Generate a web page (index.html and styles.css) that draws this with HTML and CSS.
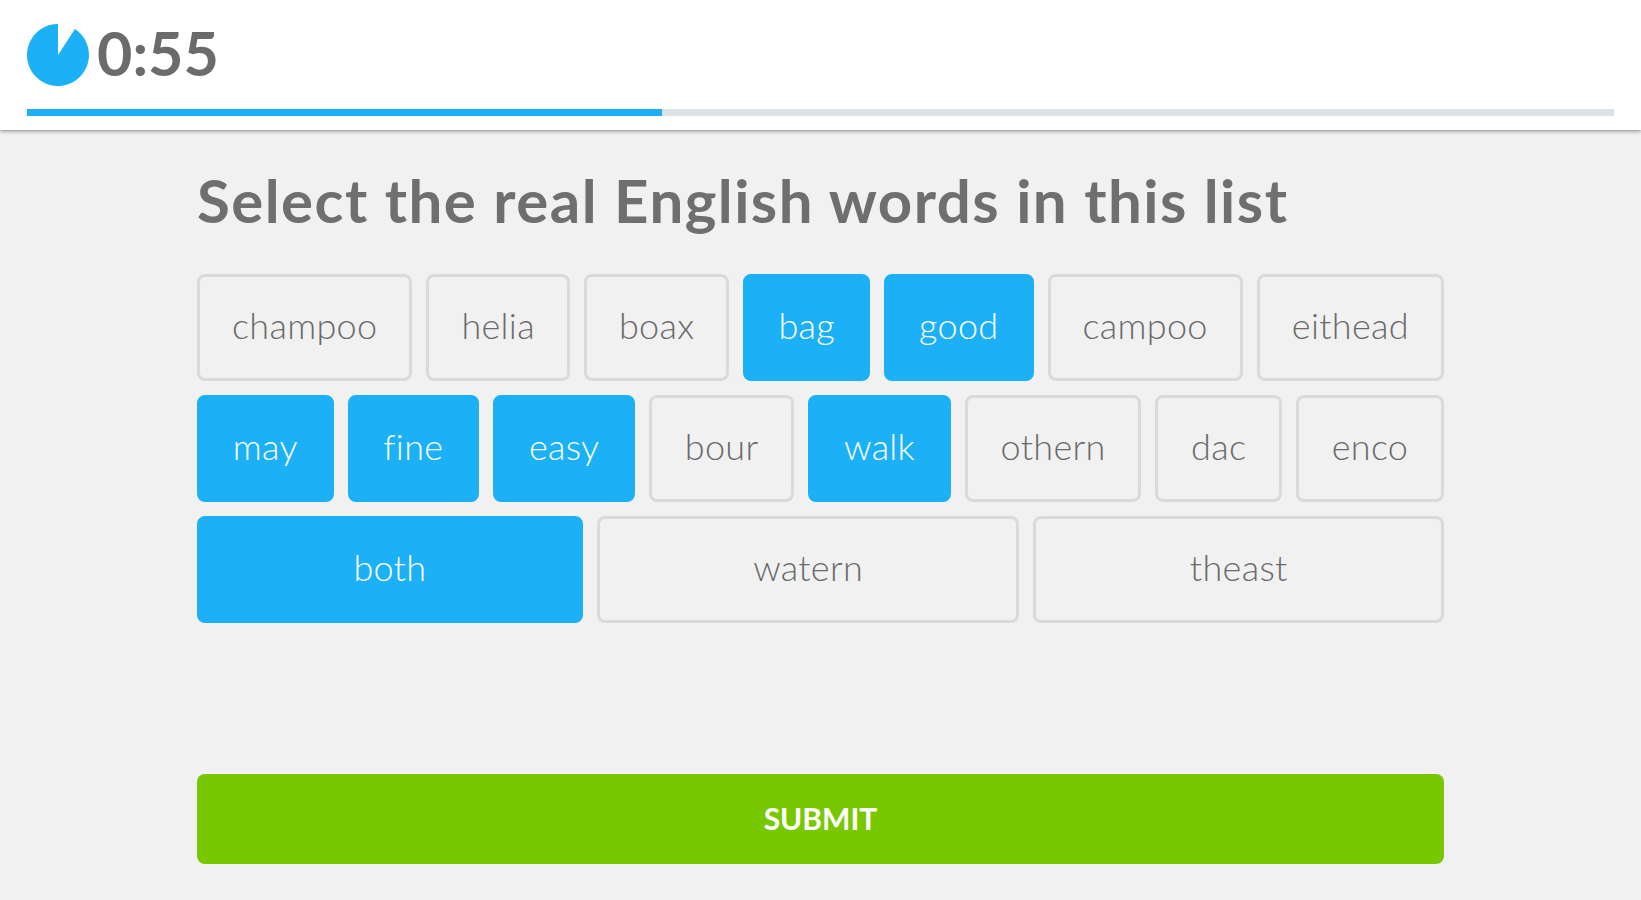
FILE: index.html
```html
<!DOCTYPE html>
<html lang="en">
<head>
    <meta charset="UTF-8">
    <meta name="viewport" content="width=device-width, initial-scale=1.0">
    <title>Select the real English words</title>
    <link rel="stylesheet" href="styles.css">
</head>
<body>
    <header class="top-bar">
        <div class="timer">
            <svg class="timer-icon" viewBox="0 0 62 62" width="62" height="62" aria-hidden="true">
                <path d="M31 31 L31 0 A31 31 0 1 0 48 5.1 Z" fill="#1cb0f6"/>
            </svg>
            <span class="timer-text">0:55</span>
        </div>
        <div class="progress">
            <div class="progress-fill"></div>
        </div>
    </header>

    <main class="container">
        <h1 class="title">Select the real English words in this list</h1>
        <div class="words">
            <div class="word-row">
                <button class="word">champoo</button>
                <button class="word">helia</button>
                <button class="word">boax</button>
                <button class="word selected">bag</button>
                <button class="word selected">good</button>
                <button class="word">campoo</button>
                <button class="word">eithead</button>
            </div>
            <div class="word-row">
                <button class="word selected">may</button>
                <button class="word selected">fine</button>
                <button class="word selected">easy</button>
                <button class="word">bour</button>
                <button class="word selected">walk</button>
                <button class="word">othern</button>
                <button class="word">dac</button>
                <button class="word">enco</button>
            </div>
            <div class="word-row">
                <button class="word selected">both</button>
                <button class="word">watern</button>
                <button class="word">theast</button>
            </div>
        </div>
        <button class="submit">SUBMIT</button>
    </main>
</body>
</html>
```

FILE: styles.css
```css
* {
    box-sizing: border-box;
}
body {
    font-family: Lato, "Open Sans", sans-serif;
    background-color: #f1f1f1;
    color: #6f6f6f;
    margin: 0;
}
.top-bar {
    height: 130px;
    padding: 24px 27px 0;
    background: #fff;
    box-shadow: 0 1px 4px rgba(0, 0, 0, 0.45);
}
.timer {
    display: flex;
    align-items: center;
    gap: 8px;
    height: 62px;
}
.timer-icon {
    flex: none;
}
.timer-text {
    padding-bottom: 4px;
    font-size: 61px;
    font-weight: 700;
    line-height: 62px;
    color: #6b6b6b;
}
.progress {
    height: 7px;
    margin-top: 23px;
    background: #d9e3e6;
}
.progress-fill {
    width: 635px;
    height: 100%;
    background: #1cb0f6;
}
.container {
    width: 1247px;
    margin-left: 197px;
}
.title {
    margin: 34px 0 38px;
    font-size: 60px;
    font-weight: 700;
    letter-spacing: 1.45px;
    line-height: 72px;
    color: #6f6f6f;
}
.words {
    display: flex;
    flex-direction: column;
    gap: 14px;
}
.word-row {
    display: flex;
    gap: 14px;
}
.word {
    flex: 1 1 auto;
    height: 107px;
    padding: 0 32px 5px;
    background: transparent;
    border: 3px solid #dadada;
    border-radius: 8px;
    font-family: inherit;
    font-size: 36px;
    font-weight: 300;
    letter-spacing: 0.3px;
    color: #6a6a6a;
    cursor: pointer;
}
.word.selected {
    background: #1cb0f6;
    border-color: #1cb0f6;
    color: #fff;
}
.submit {
    display: block;
    width: 100%;
    height: 90px;
    margin-top: 151px;
    padding-bottom: 4px;
    background: #78c800;
    border: none;
    border-radius: 8px;
    font-family: inherit;
    font-size: 30px;
    font-weight: 700;
    color: #fff;
    cursor: pointer;
}
```
